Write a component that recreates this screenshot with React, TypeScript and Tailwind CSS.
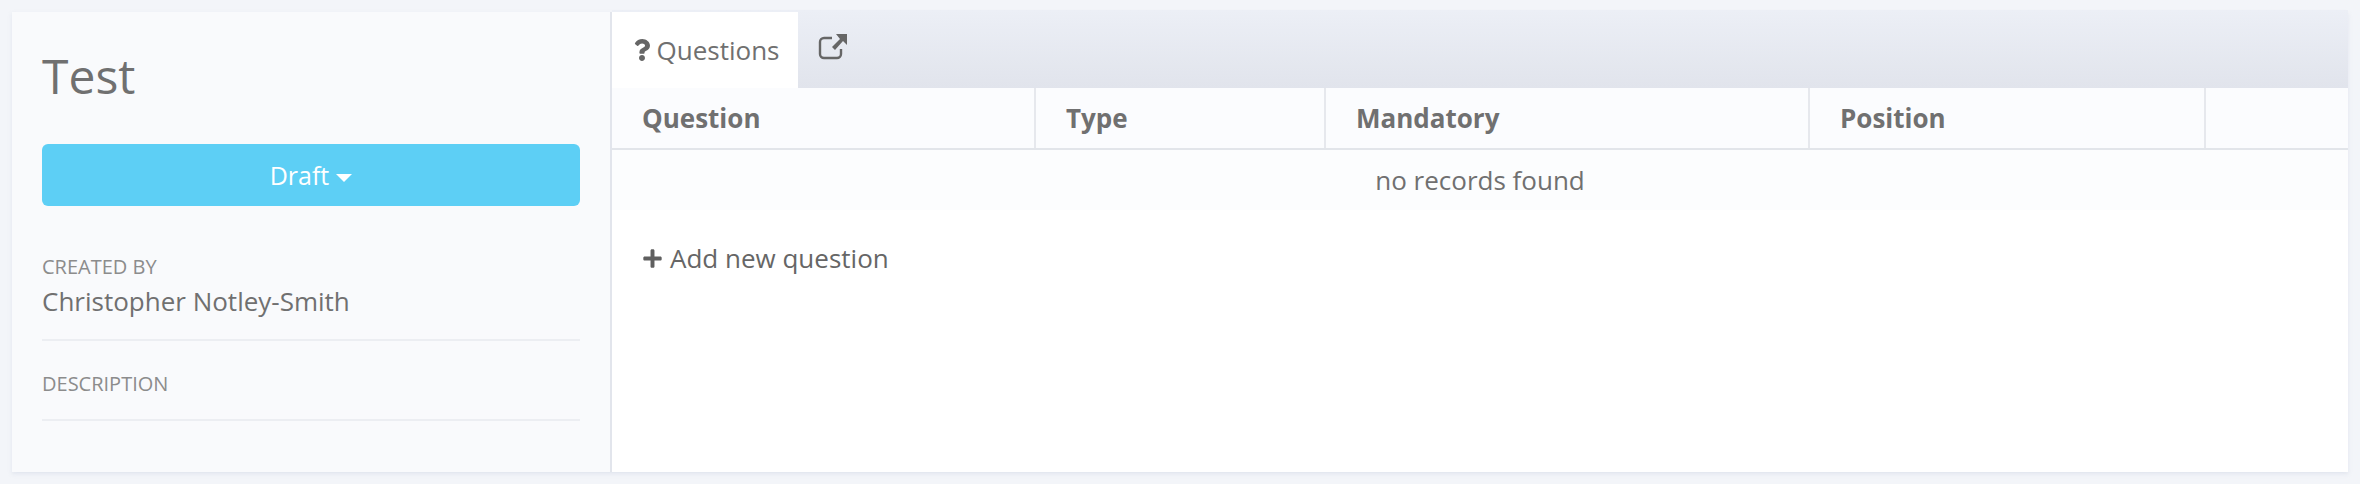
import { FaPlus, FaQuestion } from 'react-icons/fa'

const COLUMNS = [
  { label: 'Question', width: 'w-[424px]' },
  { label: 'Type', width: 'w-[290px]' },
  { label: 'Mandatory', width: 'w-[484px]' },
  { label: 'Position', width: 'w-[396px]' },
  { label: '', width: 'flex-1' },
]

function Sidebar() {
  return (
    <aside className="w-[600px] shrink-0 border-r-2 border-[#e2e5ec] bg-[#f9fafc] px-[30px]">
      <h1 className="mt-[34px] text-[48px] leading-[60px] text-[#707070]">Test</h1>
      <button className="mt-[38px] flex h-[62px] w-full items-center justify-center gap-[7px] rounded-[6px] bg-[#5dcff5] pt-[2px] text-[25px] text-white">
        Draft
        <span className="mt-[4px] border-x-[8px] border-t-[8px] border-x-transparent border-t-white" />
      </button>
      <div className="mt-[46px] text-[20px] leading-[30px] text-[#8c8c8c]">CREATED BY</div>
      <div className="mt-[1px] border-b-2 border-[#eceef2] pb-[20px] text-[26px] leading-[36px] text-[#707070]">
        Christopher Notley-Smith
      </div>
      <div className="mt-[28px] border-b-2 border-[#eceef2] pb-[20px] text-[20px] leading-[30px] text-[#8c8c8c]">
        DESCRIPTION
      </div>
    </aside>
  )
}

function Tabs() {
  return (
    <div className="-mt-[2px] flex h-[78px] bg-gradient-to-b from-[#eceff6] to-[#e1e4ec] pb-[2px]">
      <div className="mt-[2px] flex h-[76px] w-[186px] items-center justify-center gap-[4px] bg-white text-[26px] text-[#707070]">
        <FaQuestion className="text-[22px] text-[#666666]" />
        Questions
      </div>
      <div className="flex h-[76px] w-[70px] items-center justify-center pb-[2px] text-[#666666]">
        <svg width="30" height="26" viewBox="0 0 30 26" fill="none">
          <path d="M23 15v5a4 4 0 0 1-4 4H6a4 4 0 0 1-4-4V8a4 4 0 0 1 4-4h8" stroke="currentColor" strokeWidth="2.4" />
          <path d="M18 0h11v11l-4-4-8 9-3-3 8-8z" fill="currentColor" />
        </svg>
      </div>
    </div>
  )
}

function QuestionsTable() {
  return (
    <div>
      <div className="flex h-[62px] border-b-2 border-[#e2e5ea] bg-[#fbfcfe]">
        {COLUMNS.map((col) => (
          <div
            key={col.label || 'actions'}
            className={`${col.width} flex items-center border-r-2 border-[#e6e8ed] pl-[30px] text-[26px] font-bold text-[#707070] last:border-r-0`}
          >
            {col.label}
          </div>
        ))}
      </div>
      <div className="flex h-[60px] items-center justify-center bg-[#fcfdfe] text-[26px] text-[#707070]">
        no records found
      </div>
    </div>
  )
}

export default function App() {
  return (
    <div className="h-[484px] bg-[#f3f5f9] pt-[12px] pl-[12px] pr-[12px] font-['Open_Sans',sans-serif]">
      <div className="flex h-[460px] bg-white shadow-[0_2px_4px_rgba(220,225,235,0.8)]">
        <Sidebar />
        <main className="min-w-0 flex-1">
          <Tabs />
          <QuestionsTable />
          <div className="mt-[29px] flex items-center gap-[7px] pl-[30px] text-[26px] text-[#666666]">
            <FaPlus className="text-[21px] text-[#5f5f5f]" />
            Add new question
          </div>
        </main>
      </div>
    </div>
  )
}
